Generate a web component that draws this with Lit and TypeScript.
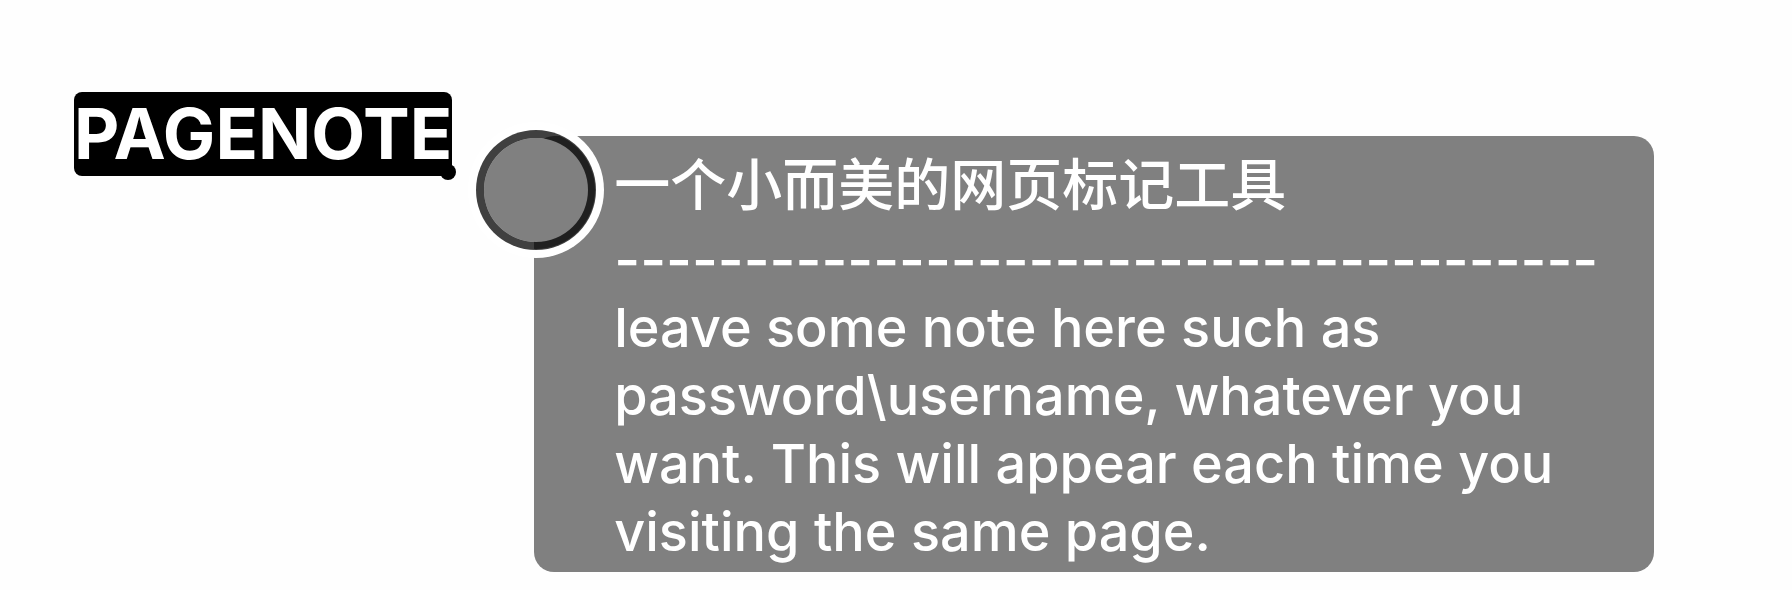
import { LitElement, html, css } from "lit";
import { customElement, property } from "lit/decorators.js";

@customElement("note-card")
class NoteCard extends LitElement {
  @property() heading = "";
  @property() rule = "";
  @property() text = "";

  static styles = css`
    :host {
      display: block;
      position: relative;
      box-sizing: border-box;
      padding: 8px 48px 6px 80px;
      border-radius: 20px;
      background: #808080;
      color: #fff;
      font-size: 56px;
      font-weight: 500;
      line-height: 68px;
    }
    .heading,
    .rule,
    .text {
      margin: 0;
      font-weight: inherit;
      font-size: inherit;
    }
    .heading {
      line-height: 82px;
    }
    .text {
      font-size: 54px;
    }
    .handle {
      position: absolute;
      left: -58px;
      top: -6px;
      box-sizing: border-box;
      width: 120px;
      height: 120px;
      padding: 0;
      border: 8px solid rgba(0, 0, 0, 0.75);
      border-radius: 50%;
      background: #808080;
      background-clip: padding-box;
      box-shadow: 0 0 0 8px #fff;
      cursor: pointer;
    }
  `;

  render() {
    return html`
      <h2 class="heading">${this.heading}</h2>
      <p class="rule">${this.rule}</p>
      <p class="text">${this.text}</p>
      <button class="handle" type="button" aria-label="Note"></button>
    `;
  }
}

@customElement("app-root")
class AppRoot extends LitElement {
  static styles = css`
    :host {
      display: flex;
      box-sizing: border-box;
      align-items: flex-start;
      gap: 82px;
      min-height: 100vh;
      padding: 92px 138px 18px 74px;
      border-bottom: 1px solid #f6f6f6;
      background: #fefefe;
      font-family: Inter, "Noto Sans CJK SC", sans-serif;
    }
    .mark {
      position: relative;
      flex: none;
      margin: 0;
      border-radius: 8px;
      background: #000;
      color: #fff;
      font-size: 70px;
      font-weight: 700;
      line-height: 84px;
    }
    .mark::after {
      content: "";
      position: absolute;
      right: -4px;
      bottom: -4px;
      width: 16px;
      height: 16px;
      border-radius: 50%;
      background: #000;
    }
    .card {
      flex: 1;
      min-width: 0;
      margin-top: 44px;
    }
  `;

  render() {
    return html`
      <h1 class="mark">PAGENOTE</h1>
      <note-card
        class="card"
        heading="一个小而美的网页标记工具"
        .rule=${"-".repeat(38)}
        .text=${"leave some note here such as password\\username, whatever you want. This will appear each time you visiting the same page."}
      ></note-card>
    `;
  }
}
